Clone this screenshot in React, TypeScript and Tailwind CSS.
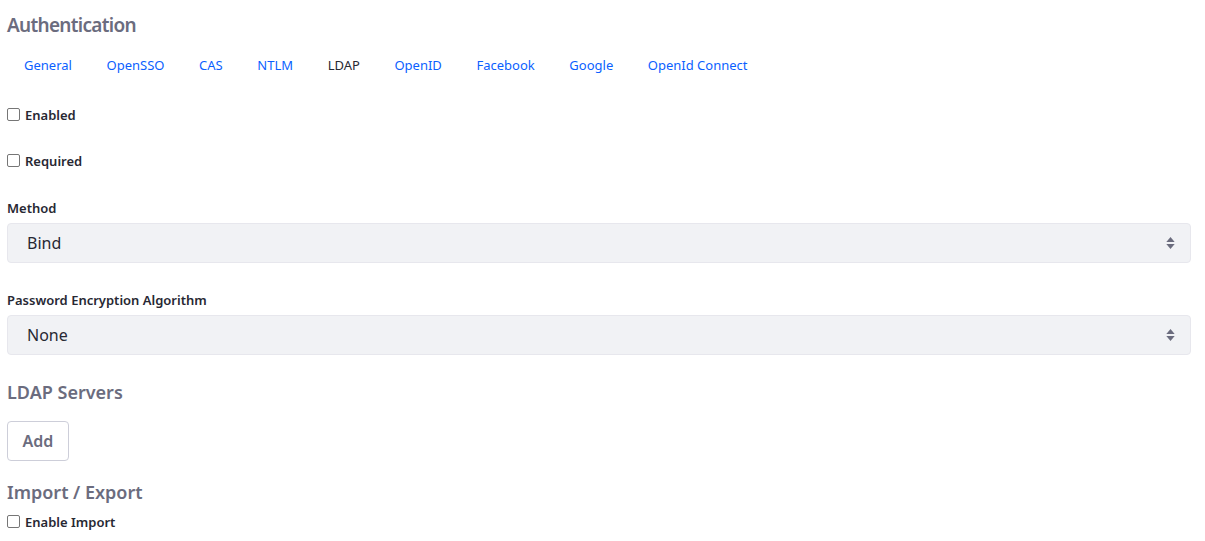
const tabs = ["General", "OpenSSO", "CAS", "NTLM", "LDAP", "OpenID", "Facebook", "Google", "OpenId Connect"];

function Check({ label }: { label: string }) {
    return (
        <label className="flex items-center gap-[5px] text-[13px] font-semibold text-[#272833]">
            <span className="w-[13px] h-[13px] border border-[#767676] rounded-[2px] bg-white -mt-[2px]" />
            {label}
        </label>
    );
}

function Select({ value }: { value: string }) {
    return (
        <div className="flex items-center justify-between h-[40px] rounded-[4px] bg-[#f1f2f5] border border-[#e7e7ed] pl-[19px] pr-[15px] text-[16px] text-[#272833]">
            <span>{value}</span>
            <span className="flex flex-col items-center leading-none">
                <svg width="9" height="5" viewBox="0 0 10 6"><path d="M5 0 L10 6 L0 6 Z" fill="#6b6c7e" /></svg>
                <svg width="9" height="5" viewBox="0 0 10 6" className="mt-[2px]"><path d="M0 0 L10 0 L5 6 Z" fill="#6b6c7e" /></svg>
            </span>
        </div>
    );
}

export default function App() {
    return (
        <div className="w-[1205px] h-[541px] bg-white px-[7px] overflow-hidden" style={{ fontFamily: '"Noto Sans", sans-serif' }}>
            <div className="w-[1184px]">
                {/* Header */}
                <h1 className="pt-[12px] text-[19px] font-semibold tracking-[-0.7px] text-[#6b6c7e] leading-[26px]">Authentication</h1>

                {/* Tabs */}
                <nav className="flex mt-[17px] ml-[1px]">
                    {tabs.map((t) => (
                        <a
                            key={t}
                            className={`px-[17.3px] first:pl-[16px] text-[13px] leading-[20px] ${t === "LDAP" ? "text-[#272833]" : "text-[#0b5fff]"}`}
                        >
                            {t}
                        </a>
                    ))}
                </nav>

                <div className="mt-[31px]">
                    <Check label="Enabled" />
                </div>
                <div className="mt-[26px]">
                    <Check label="Required" />
                </div>

                <div className="mt-[28px] text-[13px] font-semibold text-[#272833] leading-[18px]">Method</div>
                <div className="mt-[6px]">
                    <Select value="Bind" />
                </div>

                <div className="mt-[28px] text-[13px] font-semibold text-[#272833] leading-[18px]">Password Encryption Algorithm</div>
                <div className="mt-[6px]">
                    <Select value="None" />
                </div>

                <h2 className="mt-[24px] text-[18px] font-semibold text-[#6b6c7e] leading-[26px]">LDAP Servers</h2>
                <button className="mt-[16px] h-[40px] w-[62px] rounded-[4px] border border-[#cdced9] bg-white text-[16px] font-semibold text-[#6b6c7e]">
                    Add
                </button>

                <h2 className="mt-[18px] text-[18px] font-semibold text-[#6b6c7e] leading-[26px]">Import / Export</h2>
                <div className="mt-[8px]">
                    <Check label="Enable Import" />
                </div>
            </div>
        </div>
    );
}
